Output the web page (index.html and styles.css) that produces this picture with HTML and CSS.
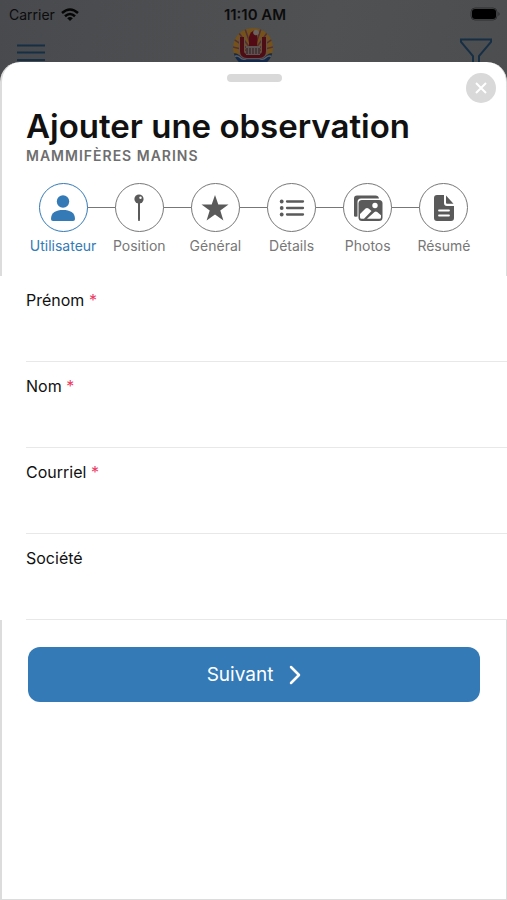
FILE: index.html
```html
<!DOCTYPE html>
<html lang="fr">
  <head>
    <meta charset="UTF-8" />
    <meta name="viewport" content="width=device-width, initial-scale=1.0" />
    <title>Ajouter une observation</title>
    <link rel="stylesheet" href="styles.css" />
  </head>

  <body>
    <header class="backdrop">
      <div class="status-bar">
        <div class="carrier">
          <span>Carrier</span>
          <svg width="18" height="13" viewBox="0 0 18 13" fill="none" stroke="#060606" stroke-width="2.5">
            <path d="M1 5Q9-2 17 5M4 8.300Q9 3.800 14 8.300" />
            <path d="M6.200 10.200Q9 7.600 11.800 10.200L9 13Z" fill="#060606" stroke="none" />
          </svg>
        </div>
        <span class="time">11:10 AM</span>
        <svg class="battery" width="31" height="14" viewBox="0 0 31 14">
          <rect x="1" y="1" width="26" height="12" rx="4" fill="none" stroke="#2e2f30" />
          <rect x="2" y="2" width="24" height="10" rx="3" fill="#000" />
          <path d="M28.500 5v4q2-2 0-4" fill="#222" />
        </svg>
      </div>
      <div class="app-bar">
        <button class="icon-button" aria-label="Menu">
          <svg width="30" height="34" viewBox="0 0 30 34" stroke="#172f45" stroke-width="2">
            <path d="M1 17.500h28M1 24.500h28M1 32h28" />
          </svg>
        </button>
        <svg class="emblem" width="42" height="34" viewBox="0 0 42 34">
          <clipPath id="disc"><circle cx="21" cy="20" r="20" /></clipPath>
          <g clip-path="url(#disc)">
            <rect width="42" height="40" fill="#74521a" />
            <path d="M21 24L-3 18M21 24L-2 9M21 24L4 1M21 24L12-2M21 24L30-2M21 24L38 1M21 24L44 9M21 24L45 18" stroke="#4f3038" stroke-width="1.500" />
            <path d="M0 26q4-2 7 1q4 3 7 0h14q3 3 7 0q3-3 7-1v14H0z" fill="#13294a" />
            <path d="M1 29.500q4-3 7 0t7 1h12q4 2 7-1t7 0" fill="none" stroke="#5d6064" stroke-width="1.300" />
            <path d="M10 9v14q0 5 5 5h12q5 0 5-5V9" fill="none" stroke="#63504f" stroke-width="6" />
            <path d="M10 9v14q0 5 5 5h12q5 0 5-5V9" fill="none" stroke="#4c0d14" stroke-width="4" />
            <path d="M14 18h14v9H14z" fill="#5c5353" />
            <path d="M15 20v6M18 20v6M21 20v6M24 20v6M27 20v6" stroke="#33191c" />
            <path d="M17 18V9q1-6 7-7q2 6 1 16z" fill="#520b14" />
            <circle cx="24" cy="4.500" r="2.800" fill="#6a6560" />
          </g>
        </svg>
        <button class="icon-button" aria-label="Filtrer">
          <svg width="34" height="34" viewBox="0 0 34 34" fill="none" stroke="#172f45" stroke-width="2">
            <path d="M14 36V28L2 14V11.500H32V14L20 28V36" />
          </svg>
        </button>
      </div>
    </header>

    <main class="sheet">
      <div class="handle"></div>
      <button class="close" aria-label="Fermer">
        <svg width="12" height="12" viewBox="0 0 12 12" stroke="#fff" stroke-width="2">
          <path d="M1 1L11 11M11 1L1 11" />
        </svg>
      </button>

      <div class="heading">
        <h1>Ajouter une observation</h1>
        <p>Mammifères marins</p>
      </div>

      <ol class="steps">
        <li class="step active">
          <span class="circle">
            <svg width="26" height="28" viewBox="0 0 26 28" fill="currentColor">
              <circle cx="13" cy="7.500" r="6.200" />
              <path d="M1 25C1 18.500 6 16 13 16s12 2.500 12 9q0 2-2 2H3q-2 0-2-2z" />
            </svg>
          </span>
          <span>Utilisateur</span>
        </li>
        <li class="step">
          <span class="circle">
            <svg width="26" height="28" viewBox="0 0 26 28" fill="currentColor">
              <path d="M12.500 7h1v18l-.500 2-.500-2z" stroke="currentColor" />
              <circle cx="13" cy="5" r="4.600" />
              <circle cx="14.500" cy="3.700" r="1.200" fill="#fff" />
            </svg>
          </span>
          <span>Position</span>
        </li>
        <li class="step">
          <span class="circle">
            <svg width="28" height="28" viewBox="0 0 28 28" fill="currentColor">
              <path d="M14 1L17.300 10.500H27.500L19.300 16.500L22.400 26.500L14 20.500L5.600 26.500L8.700 16.500L.5 10.500H10.700Z" />
            </svg>
          </span>
          <span>Général</span>
        </li>
        <li class="step">
          <span class="circle">
            <svg width="26" height="28" viewBox="0 0 26 28" fill="currentColor" stroke="currentColor">
              <path d="M8 7.500h16M8 14h16M8 20.500h16" stroke-width="2.300" stroke-linecap="round" />
              <g stroke="none">
                <circle cx="2.700" cy="7.500" r="1.900" />
                <circle cx="2.700" cy="14" r="1.900" />
                <circle cx="2.700" cy="20.500" r="1.900" />
              </g>
            </svg>
          </span>
          <span>Détails</span>
        </li>
        <li class="step">
          <span class="circle">
            <svg width="30" height="28" viewBox="0 0 30 28" fill="currentColor">
              <path d="M1 22V4.500Q1 1.500 4 1.500H22.500Q25.500 1.500 26 4.500H8Q4.500 4.500 4.500 8V22.500Q1 23 1 22Z" />
              <rect x="5.500" y="6" width="24" height="21" rx="3.500" />
              <circle cx="22" cy="11.500" r="2.700" fill="#fff" />
              <path d="M7 20L12.500 14.500Q14 13.300 15.500 14.500L18.500 17L11 24.800H8.500Q7 24.800 7 23.300ZM14 24.800L21.500 18Q22.800 17 24.200 18L28 21.200V23.300Q28 24.800 26.500 24.800Z" fill="#fff" />
            </svg>
          </span>
          <span>Photos</span>
        </li>
        <li class="step">
          <span class="circle">
            <svg width="26" height="28" viewBox="0 0 26 28" fill="currentColor">
              <path d="M6 1h7v8q0 3 3 3h7v12q0 3-3 3H6q-3 0-3-3V4q0-3 3-3z" />
              <path d="M15 1.500L22.500 9.800H16q-1 0-1-1z" />
              <path d="M8 16.500h10M8 21.500h10" stroke="#fff" stroke-width="1.800" stroke-linecap="round" />
            </svg>
          </span>
          <span>Résumé</span>
        </li>
      </ol>

      <form>
        <div class="fields">
          <div class="field">
            <label for="prenom">Prénom <span class="required">*</span></label>
            <input id="prenom" type="text" required />
          </div>
          <div class="field">
            <label for="nom">Nom <span class="required">*</span></label>
            <input id="nom" type="text" required />
          </div>
          <div class="field">
            <label for="courriel">Courriel <span class="required">*</span></label>
            <input id="courriel" type="email" required />
          </div>
          <div class="field">
            <label for="societe">Société</label>
            <input id="societe" type="text" />
          </div>
        </div>
        <button class="next" type="submit">
          <span>Suivant</span>
          <svg width="12" height="20" viewBox="0 0 12 20" fill="none" stroke="currentColor" stroke-width="2.500">
            <path d="M2 2L10 10L2 18" stroke-linecap="round" stroke-linejoin="round" />
          </svg>
        </button>
      </form>
    </main>
  </body>
</html>
```

FILE: styles.css
```css
* {
  margin: 0;
  padding: 0;
  box-sizing: border-box;
}

body {
  display: flex;
  flex-direction: column;
  min-height: 100vh;
  font-family: Inter, "Liberation Sans", sans-serif;
  color: #111;
  background: linear-gradient(100deg, #484a4d, #505153 50%, #494b4d);
}

button {
  border: none;
  background: none;
  font-family: inherit;
  cursor: pointer;
}

svg {
  display: block;
}

/* dimmed app behind the sheet */
.backdrop {
  color: #0c0c0d;
}

.status-bar {
  display: grid;
  grid-template-columns: 1fr auto 1fr;
  align-items: center;
  height: 28px;
  padding: 0 6px 0 9px;
  font-size: 14px;
}

.carrier {
  display: flex;
  align-items: center;
  gap: 6px;
}

.time {
  font-size: 15px;
  font-weight: 600;
}

.battery {
  justify-self: end;
}

.app-bar {
  display: flex;
  justify-content: space-between;
  height: 34px;
  padding: 0 14px 0 16px;
}

/* sheet */
.sheet {
  position: relative;
  flex: 1;
  padding: 12px 0 24px;
  border: 1px solid #dcdcdc;
  border-top: none;
  border-left-width: 2px;
  border-radius: 20px 20px 0 0;
  background: #fff;
}

.handle {
  width: 55px;
  height: 8px;
  margin: 0 auto;
  border-radius: 4px;
  background: #d9d9d9;
}

.close {
  position: absolute;
  top: 11px;
  right: 10px;
  display: flex;
  align-items: center;
  justify-content: center;
  width: 30px;
  height: 30px;
  border-radius: 50%;
  background: #d9d9d9;
}

.heading {
  padding: 24px 24px 0;
}

h1 {
  font-size: 33px;
  line-height: 40px;
  font-weight: 600;
}

.heading p {
  font-size: 14px;
  line-height: 20px;
  font-weight: 600;
  letter-spacing: 1px;
  text-transform: uppercase;
  color: #6e6e6e;
}

/* stepper */
.steps {
  display: grid;
  grid-template-columns: repeat(6, 1fr);
  padding: 17px 24px 0 23px;
  list-style: none;
}

.step {
  position: relative;
  display: flex;
  flex-direction: column;
  align-items: center;
  gap: 4px;
  font-size: 14px;
  line-height: 20px;
  color: #777;
}

.step + .step::before {
  content: "";
  position: absolute;
  top: 24px;
  right: 50%;
  width: 100%;
  height: 1px;
  background: #777;
}

.circle {
  position: relative;
  z-index: 1;
  display: flex;
  align-items: center;
  justify-content: center;
  width: 49px;
  height: 49px;
  border: 1px solid #777;
  border-radius: 50%;
  background: #fff;
  color: #5a5a5a;
}

.active,
.active .circle {
  color: #337ab7;
  border-color: #337ab7;
}

/* form */
.fields {
  margin: 20px -1px 0 -2px;
  padding-left: 26px;
  position: relative;
  background: #fff;
}

.field {
  display: flex;
  flex-direction: column;
  height: 86px;
  padding-top: 12px;
  border-bottom: 1px solid #e8e8e8;
}

label {
  font-size: 16px;
  line-height: 24px;
}

.required {
  color: #eb3b63;
}

input {
  flex: 1;
  border: none;
  outline: none;
  background: transparent;
  font: inherit;
}

.next {
  display: flex;
  align-items: center;
  justify-content: center;
  gap: 16px;
  width: calc(100% - 52px);
  height: 55px;
  margin: 27px 26px 0;
  border-radius: 12px;
  background: #337ab7;
  color: #fff;
  font-size: 19px;
}
```
